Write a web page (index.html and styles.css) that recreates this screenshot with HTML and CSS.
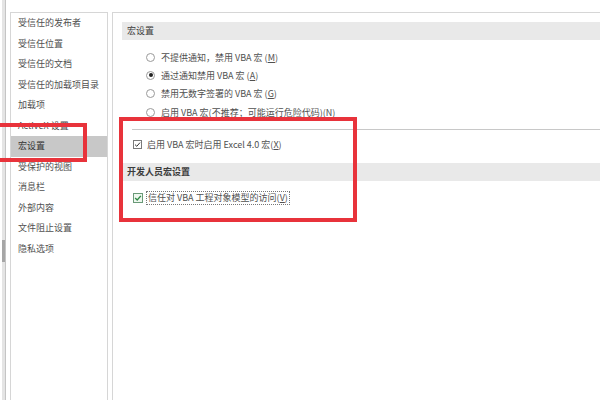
FILE: index.html
```html
<!DOCTYPE html>
<html lang="zh-CN">
<head>
    <meta charset="UTF-8">
    <title>信任中心 - 宏设置</title>
    <link rel="stylesheet" href="styles.css">
</head>
<body>
    <div class="track"><div class="thumb"></div></div>

    <ul class="nav">
        <li>受信任的发布者</li>
        <li>受信任位置</li>
        <li>受信任的文档</li>
        <li>受信任的加载项目录</li>
        <li>加载项</li>
        <li>ActiveX 设置</li>
        <li class="active">宏设置</li>
        <li>受保护的视图</li>
        <li>消息栏</li>
        <li>外部内容</li>
        <li>文件阻止设置</li>
        <li>隐私选项</li>
    </ul>

    <div class="panel">
        <div class="section-title">宏设置</div>
        <div class="radios">
            <div class="opt"><span class="radio"></span>不提供通知，禁用 VBA 宏 (<u>M</u>)</div>
            <div class="opt"><span class="radio on"></span>通过通知禁用 VBA 宏 (<u>A</u>)</div>
            <div class="opt"><span class="radio"></span>禁用无数字签署的 VBA 宏 (<u>G</u>)</div>
            <div class="opt"><span class="radio"></span>启用 VBA 宏(不推荐；可能运行危险代码)(<u>N</u>)</div>
        </div>
        <div class="sep"></div>
        <div class="check-row">
            <span class="box">
                <svg width="7" height="7" viewBox="0 0 7 7"><path d="M1 3.6 L2.8 5.3 L6 1.6" fill="none" stroke="#333" stroke-width="1"/></svg>
            </span>
            启用 VBA 宏时启用 Excel 4.0 宏(<u>X</u>)
        </div>
        <div class="section-title dev">开发人员宏设置</div>
        <div class="check-row">
            <span class="box green">
                <svg width="8" height="8" viewBox="0 0 7 7"><path d="M1 3.6 L2.8 5.3 L6 1.6" fill="none" stroke="#2f8a45" stroke-width="1.2"/></svg>
            </span>
            <span class="focus">信任对 VBA 工程对象模型的访问(<u>V</u>)</span>
        </div>
    </div>

    <div class="mark mark-nav"></div>
    <div class="mark mark-main"></div>
</body>
</html>
```

FILE: styles.css
```css
body {
    margin: 0;
    height: 400px;
    overflow: hidden;
    display: flex;
    position: relative;
    background: #ffffff;
    font-family: "Microsoft YaHei", "Noto Sans CJK SC", "Liberation Sans", sans-serif;
    font-size: 9px;
    color: #505050;
}
.track {
    width: 3px;
    margin-left: 2px;
    background: #e4e4e4;
    border-right: 1px solid #c4c4c4;
    padding-top: 240px;
}
.thumb {
    height: 22px;
    background: #a6a6a6;
}
.nav {
    list-style: none;
    margin: 12px 0 0 4px;
    padding: 0;
    width: 98px;
    box-sizing: border-box;
    border: 1px solid #d6d6d6;
    border-bottom: none;
}
.nav li {
    height: 20.5px;
    line-height: 20.5px;
    padding-left: 7px;
    white-space: nowrap;
}
.nav li.active {
    background: #c8c8c8;
    color: #333;
}
.panel {
    flex: 1;
    margin: 12px 0 0 4px;
    padding: 9px 0 0 9px;
    border-left: 1px solid #d6d6d6;
    border-top: 1px solid #d6d6d6;
}
.section-title {
    height: 18px;
    line-height: 18px;
    padding-left: 5px;
    background: #e9e9e9;
    color: #3c3c3c;
}
.section-title.dev {
    margin-top: 10px;
    font-weight: bold;
}
.radios {
    margin-top: 8px;
    padding-left: 24px;
}
.opt {
    height: 18.3px;
    display: flex;
    align-items: center;
    white-space: nowrap;
}
.radio {
    width: 7px;
    height: 7px;
    border: 1px solid #9a9a9a;
    border-radius: 50%;
    margin-right: 6px;
    display: flex;
    align-items: center;
    justify-content: center;
    background: #fff;
}
.radio.on::after {
    content: "";
    width: 4px;
    height: 4px;
    border-radius: 50%;
    background: #222;
}
.sep {
    margin: 8px 0 0 10px;
    border-top: 1px solid #c8c8c8;
}
.check-row {
    height: 18px;
    margin-top: 5px;
    padding-left: 11px;
    display: flex;
    align-items: center;
    white-space: nowrap;
}
.section-title + .check-row {
    margin-top: 8px;
}
.box {
    width: 7px;
    height: 7px;
    border: 1px solid #7a7a7a;
    margin-right: 5px;
    display: flex;
    align-items: center;
    justify-content: center;
    background: #fff;
}
.box.green {
    width: 8px;
    height: 8px;
    border-color: #6a9a78;
    background: #eef7ef;
}
.focus {
    border: 1px dotted #777;
    padding: 0 1px;
    line-height: 12px;
    margin-left: -2px;
}
.mark {
    position: absolute;
    border: 4px solid #e8333b;
    box-sizing: border-box;
}
.mark-nav {
    left: -10px;
    top: 123px;
    width: 97px;
    height: 39px;
}
.mark-main {
    left: 119px;
    top: 117px;
    width: 238px;
    height: 105px;
}
```
